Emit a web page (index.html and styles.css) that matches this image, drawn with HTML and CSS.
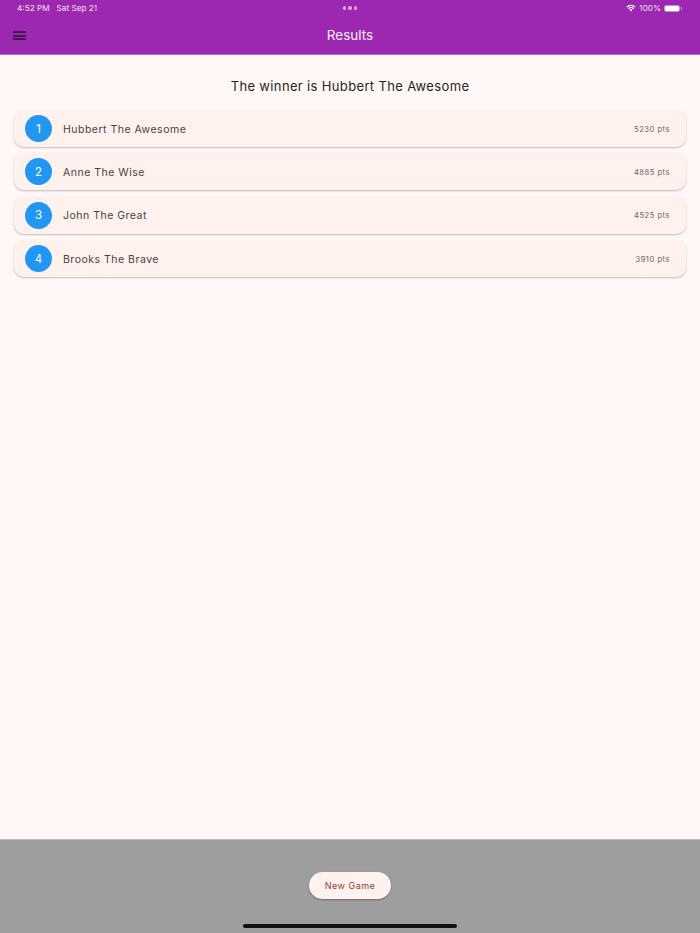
FILE: index.html

```html
<!DOCTYPE html>
<html lang="en">
<head>
    <meta charset="UTF-8">
    <meta name="viewport" content="width=device-width, initial-scale=1.0">
    <title>Results</title>
    <link rel="stylesheet" href="styles.css">
</head>
<body>
    <div class="page">
        <div class="header">
            <div class="status">
                <div class="status-left"><span>4:52 PM</span><span>Sat Sep 21</span></div>
                <div class="status-dots"><i></i><i></i><i></i></div>
                <div class="status-right">
                    <svg class="wifi" width="10" height="8" viewBox="0 0 11 9">
                        <path d="M0.3 3 A7.4 7.4 0 0 1 10.7 3 L9.7 4 A6 6 0 0 0 1.3 4 Z" fill="#fff"/>
                        <path d="M2.1 4.8 A4.8 4.8 0 0 1 8.9 4.8 L7.9 5.8 A3.4 3.4 0 0 0 3.1 5.8 Z" fill="#fff"/>
                        <path d="M3.9 6.6 A2.2 2.2 0 0 1 7.1 6.6 L5.5 8.3 Z" fill="#fff"/>
                    </svg>
                    <span>100%</span>
                    <div class="battery"><div class="battery-fill"></div></div>
                </div>
            </div>
            <div class="toolbar">
                <div class="menu"><i></i><i></i><i></i></div>
                <div class="title">Results</div>
            </div>
        </div>
        <div class="content">
            <div class="winner">The winner is Hubbert The Awesome</div>
            <div class="list">
                <div class="card">
                    <div class="rank">1</div>
                    <div class="name">Hubbert The Awesome</div>
                    <div class="points">5230 pts</div>
                </div>
                <div class="card">
                    <div class="rank">2</div>
                    <div class="name">Anne The Wise</div>
                    <div class="points">4885 pts</div>
                </div>
                <div class="card">
                    <div class="rank">3</div>
                    <div class="name">John The Great</div>
                    <div class="points">4525 pts</div>
                </div>
                <div class="card">
                    <div class="rank">4</div>
                    <div class="name">Brooks The Brave</div>
                    <div class="points">3910 pts</div>
                </div>
            </div>
        </div>
        <div class="footer">
            <button class="new-game">New Game</button>
            <div class="home-bar"></div>
        </div>
    </div>
</body>
</html>
```

FILE: styles.css

```css
html, body {
    margin: 0;
    padding: 0;
}
body {
    font-family: Inter, "Liberation Sans", sans-serif;
    background: #FFF8F6;
    color: #201A19;
}
.page {
    display: flex;
    flex-direction: column;
    height: 933px;
    overflow: hidden;
}
.header {
    height: 55px;
    background: #9C27B0;
    border-bottom: 1px solid #B968C7;
    box-sizing: border-box;
    color: white;
    flex: none;
}
.status {
    display: flex;
    justify-content: space-between;
    align-items: center;
    height: 16px;
    padding: 0 20px 0 17px;
    font-size: 8.2px;
    color: #F3E1F6;
}
.status-left {
    display: flex;
    gap: 7px;
    width: 123px;
}
.status-dots {
    display: flex;
    gap: 2px;
}
.status-dots i {
    width: 3.5px;
    height: 3.5px;
    border-radius: 50%;
    background: #E3A6EE;
}
.status-right {
    display: flex;
    justify-content: flex-end;
    align-items: center;
    gap: 3px;
    width: 120px;
}
.battery {
    position: relative;
    width: 16px;
    height: 7px;
    padding: 1px;
    box-sizing: border-box;
    border-radius: 2.5px;
    background: #C88DD3;
}
.battery::after {
    content: "";
    position: absolute;
    right: -1.5px;
    top: 2px;
    width: 1px;
    height: 3px;
    background: #C88DD3;
}
.battery-fill {
    height: 100%;
    border-radius: 1.5px;
    background: white;
}
.toolbar {
    position: relative;
    display: flex;
    justify-content: center;
    align-items: center;
    height: 38px;
}
.menu {
    position: absolute;
    left: 13px;
    top: 15px;
    display: flex;
    flex-direction: column;
    gap: 1.5px;
}
.menu i {
    display: block;
    width: 13px;
    height: 2px;
    background: #3F1A4A;
}
.title {
    font-size: 13.5px;
    color: #FBEFFC;
}
.content {
    flex: 1;
    padding: 0 14px;
}
.winner {
    margin-top: 22px;
    text-align: center;
    font-size: 13px;
    line-height: 18px;
    letter-spacing: 0.35px;
    color: #2B2423;
}
.list {
    display: flex;
    flex-direction: column;
    gap: 6.4px;
    margin-top: 15px;
}
.card {
    display: flex;
    align-items: center;
    height: 37px;
    padding: 0 16px 0 11px;
    background: #FFF1EE;
    border-radius: 10px;
    box-shadow: 0 1px 2px rgba(0, 0, 0, 0.25);
}
.rank {
    display: flex;
    justify-content: center;
    align-items: center;
    width: 27px;
    height: 27px;
    border-radius: 50%;
    background: #2196F3;
    color: white;
    font-size: 11.5px;
    flex: none;
}
.name {
    flex: 1;
    margin: 1px 0 0 11px;
    font-size: 10.5px;
    letter-spacing: 0.5px;
    color: #4A4240;
}
.points {
    margin-top: 1px;
    font-size: 7.5px;
    letter-spacing: 0.55px;
    color: #6B6260;
}
.footer {
    position: relative;
    height: 94px;
    background: #9E9E9E;
    border-top: 1px solid #BDBDBD;
    box-sizing: border-box;
    flex: none;
    display: flex;
    justify-content: center;
}
.new-game {
    margin-top: 32px;
    width: 82px;
    height: 27px;
    padding: 0;
    border: none;
    border-radius: 14px;
    background: #FFF1EE;
    box-shadow: 0 1px 2px rgba(0, 0, 0, 0.3);
    color: #8F3F30;
    font-family: inherit;
    font-size: 9px;
    letter-spacing: 0.5px;
}
.home-bar {
    position: absolute;
    left: 243px;
    bottom: 5px;
    width: 214px;
    height: 4px;
    border-radius: 2px;
    background: #111;
}
```
